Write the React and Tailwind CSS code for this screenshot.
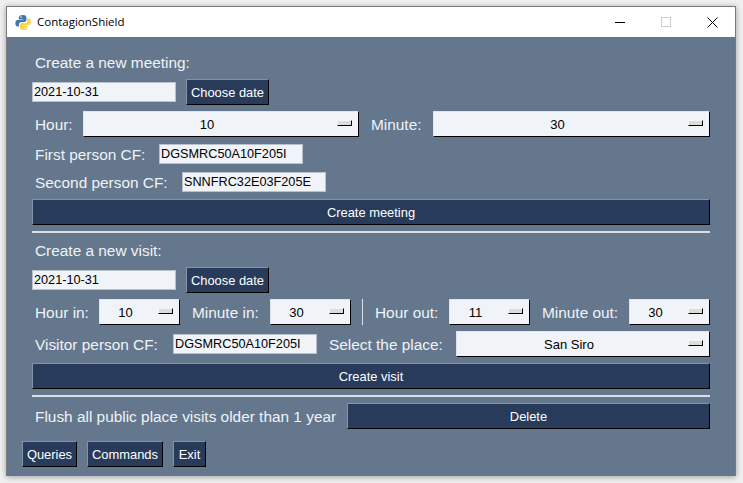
import React from "react";

const sans = "font-['Liberation_Sans',Arial,sans-serif]";

function Label({ children, className = "" }) {
  return <span className={`text-[15.4px] leading-[20px] pt-[1px] text-[#f0f3f7] whitespace-nowrap ${className}`}>{children}</span>;
}

function Btn({ children, className = "" }) {
  return (
    <div className={`h-[26px] flex items-center justify-center pt-[1px] bg-[#283b5b] text-white text-[12.9px] border border-t-[#8494a8] border-l-[#8494a8] border-b-black border-r-black whitespace-nowrap ${className}`}>
      {children}
    </div>
  );
}

function Input({ children, className = "" }) {
  return (
    <div className={`h-[20px] w-[144px] flex items-center pl-[1px] pt-[1px] bg-[#f0f3f7] text-black text-[12.7px] border border-[#b9c2cc] whitespace-nowrap ${className}`}>
      {children}
    </div>
  );
}

function Select({ children, className = "" }) {
  return (
    <div className={`relative h-[26px] flex items-center justify-center pr-[28px] pt-[1px] bg-[#f0f3f7] text-black text-[13px] border border-t-[#dfe4ea] border-l-[#dfe4ea] border-b-black border-r-black ${className}`}>
      {children}
      <span className="absolute right-[6px] top-[8px] w-[15px] h-[6px] bg-[#dcdcdc] border border-t-[#f4f4f4] border-l-[#f4f4f4] border-b-black border-r-black" />
    </div>
  );
}

function Sep() {
  return <div className="h-[2px] bg-[#dcdfe3] w-[678px]" />;
}

function PythonLogo() {
  return (
    <svg width="16" height="17" viewBox="0 0 16 17" className="shrink-0">
      <path d="M8 1C5 1 3.8 2 3.8 3.6V5.4H8.2V6H2.6C1 6 .4 7.6.4 9.2c0 1.8.7 3.3 2 3.3H4V10.3c0-1.3 1-2.3 2.3-2.3h3.2c1 0 1.9-.9 1.9-1.9V3.4C11.4 1.8 10 1 8 1Z" fill="#3f78ad" />
      <path d="M8.2 16c3 0 4.2-1 4.2-2.6v-1.8H8V11h5.6c1.6 0 2.2-1.6 2.2-3.2 0-1.8-.7-3.3-2-3.3h-1.6v2.2c0 1.3-1 2.3-2.3 2.3H6.7c-1 0-1.9.9-1.9 1.9v2.7c0 1.6 1.4 2.4 3.4 2.4Z" fill="#fbd44f" />
      <circle cx="6" cy="3" r=".8" fill="#fff" />
      <circle cx="10.2" cy="14" r=".8" fill="#fff" />
    </svg>
  );
}

export default function App() {
  return (
    <div className={`w-[743px] h-[483px] bg-[#f0f0f0] pt-[6px] pl-[6px] ${sans}`}>
      <div className="w-[730px] h-[470px] border-l border-t border-r border-[#7a7a7a] shadow-[0_1px_6px_rgba(0,0,0,0.35)] flex flex-col">
        <div className="h-[30px] shrink-0 bg-white flex items-center pl-[8px]">
          <PythonLogo />
          <span className="ml-[6px] text-[11.5px] text-black font-['Open_Sans',sans-serif]">ContagionShield</span>
          <div className="ml-auto flex items-center">
            <svg width="10" height="10" viewBox="0 0 10 10" className="mr-[36px]"><path d="M0 5.5H10" stroke="#000" /></svg>
            <svg width="10" height="10" viewBox="0 0 10 10" className="mr-[36px]"><rect x=".5" y=".5" width="9" height="9" fill="none" stroke="#ccc" /></svg>
            <svg width="11" height="11" viewBox="0 0 11 11" className="mr-[17px]"><path d="M.5.5L10.5 10.5M10.5.5L.5 10.5" stroke="#000" /></svg>
          </div>
        </div>

        <div className="flex-1 bg-[#64778d] pl-[25px] flex flex-col">
          <div className="mt-[15px] h-[20px] flex items-center pl-[3px]"><Label>Create a new meeting:</Label></div>

          <div className="mt-[7px] flex items-center">
            <Input>2021-10-31</Input>
            <Btn className="ml-[10px] w-[83px]">Choose date</Btn>
          </div>

          <div className="mt-[6px] flex items-center">
            <Label className="ml-[3px] w-[48px]">Hour:</Label>
            <Select className="w-[276px]">10</Select>
            <Label className="ml-[12px] w-[62px]">Minute:</Label>
            <Select className="w-[277px]">30</Select>
          </div>

          <div className="mt-[7px] h-[20px] flex items-center">
            <Label className="ml-[3px] w-[124px]">First person CF:</Label>
            <Input>DGSMRC50A10F205I</Input>
          </div>

          <div className="mt-[8px] h-[20px] flex items-center">
            <Label className="ml-[3px] w-[147px]">Second person CF:</Label>
            <Input>SNNFRC32E03F205E</Input>
          </div>

          <Btn className="mt-[7px] w-[678px]">Create meeting</Btn>
          <div className="mt-[6px]"><Sep /></div>

          <div className="mt-[7px] h-[20px] flex items-center pl-[3px]"><Label>Create a new visit:</Label></div>

          <div className="mt-[7px] flex items-center">
            <Input>2021-10-31</Input>
            <Btn className="ml-[10px] w-[83px]">Choose date</Btn>
          </div>

          <div className="mt-[6px] flex items-center">
            <Label className="ml-[3px] w-[64px]">Hour in:</Label>
            <Select className="w-[81px]">10</Select>
            <Label className="ml-[12px] w-[78px]">Minute in:</Label>
            <Select className="w-[81px]">30</Select>
            <div className="ml-[11px] w-[1px] h-[26px] bg-[#dcdfe3]" />
            <Label className="ml-[12px] w-[74px]">Hour out:</Label>
            <Select className="w-[81px]">11</Select>
            <Label className="ml-[12px] w-[87px]">Minute out:</Label>
            <Select className="w-[81px]">30</Select>
          </div>

          <div className="mt-[6px] flex items-center">
            <Label className="ml-[3px] w-[138px]">Visitor person CF:</Label>
            <Input>DGSMRC50A10F205I</Input>
            <Label className="ml-[12px] w-[127px]">Select the place:</Label>
            <Select className="w-[254px]">San Siro</Select>
          </div>

          <Btn className="mt-[6px] w-[678px]">Create visit</Btn>
          <div className="mt-[6px]"><Sep /></div>

          <div className="mt-[6px] flex items-center">
            <Label className="ml-[3px] w-[312px]">Flush all public place visits older than 1 year</Label>
            <Btn className="w-[363px]">Delete</Btn>
          </div>

          <div className="mt-[12px] -ml-[10px] flex items-center gap-[10px]">
            <Btn className="w-[55px]">Queries</Btn>
            <Btn className="w-[76px]">Commands</Btn>
            <Btn className="w-[33px]">Exit</Btn>
          </div>
        </div>
      </div>
    </div>
  );
}
